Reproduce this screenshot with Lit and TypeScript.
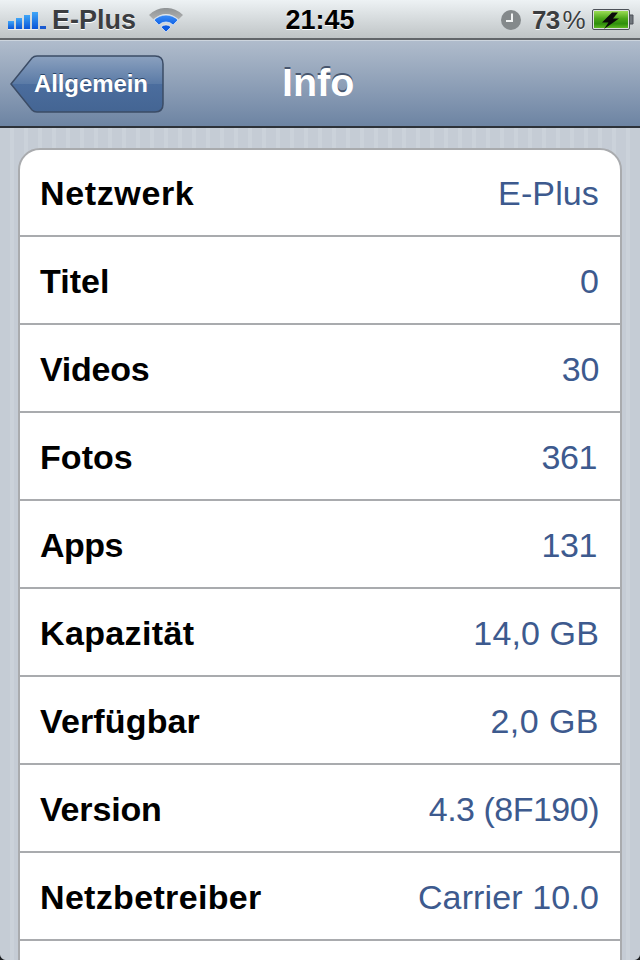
import { LitElement, html, css, svg } from 'lit';
import { customElement } from 'lit/decorators.js';

// label, value, label tracking, value tracking, extra right inset
const rows: [string, string, number, number, number][] = [
  ['Netzwerk', 'E-Plus', 0.63, 0.13, 0],
  ['Titel', '0', 0.05, 0, 0],
  ['Videos', '30', -0.25, -0.3, 0],
  ['Fotos', '361', 0.05, -0.4, 2],
  ['Apps', '131', -0.5, -0.4, 2],
  ['Kapazität', '14,0 GB', 0.36, 0.13, 0],
  ['Verfügbar', '2,0 GB', 0.14, 0.46, 0],
  ['Version', '4.3 (8F190)', -0.18, -0.5, 0],
  ['Netzbetreiber', 'Carrier 10.0', 0.33, 0.13, 0],
  ['', '', 0, 0, 0],
];

const signal = svg`<svg class="signal" width="38" height="18" viewBox="0 0 38 18">
  <defs><linearGradient id="sig" x1="0" y1="0" x2="0" y2="1"><stop offset="0" stop-color="#3fa6f7"/><stop offset="1" stop-color="#0a55d8"/></linearGradient></defs>
  <rect x="0" y="9" width="6" height="8" fill="url(#sig)"/>
  <rect x="8" y="6" width="6" height="11" fill="url(#sig)"/>
  <rect x="16" y="3" width="6" height="14" fill="url(#sig)"/>
  <rect x="24" y="0" width="6" height="17" fill="url(#sig)"/>
  <rect x="32" y="14" width="6" height="3" fill="#1a5ad0"/>
  <rect x="0" y="17" width="30" height="1" fill="#fff" opacity="0.7"/>
</svg>`;

const wifi = svg`<svg class="wifi" width="34" height="25" viewBox="0 0 34 25">
  <defs>
    <linearGradient id="wg" x1="0" y1="0" x2="0" y2="1"><stop offset="0" stop-color="#8f9395"/><stop offset="1" stop-color="#aeb0b0"/></linearGradient>
    <linearGradient id="wb" x1="0" y1="0" x2="0" y2="1"><stop offset="0" stop-color="#3d8df5"/><stop offset="1" stop-color="#0f62e6"/></linearGradient>
  </defs>
  <path d="M0 7 A24 24 0 0 1 34 7 L29.700 11.300 A18 18 0 0 0 4.300 11.300 Z" fill="url(#wg)"/>
  <path d="M5 12 A17 17 0 0 1 29 12 L24.100 16.900 A10 10 0 0 0 9.900 16.900 Z" fill="url(#wb)" stroke="#fff" stroke-width="0.600"/>
  <path d="M12 19 A7 7 0 0 1 22 19 L17 24 Z" fill="#0d5ae0" stroke="#fff" stroke-width="0.600"/>
</svg>`;

const clock = svg`<svg class="clock" width="20" height="20" viewBox="0 0 20 20">
  <circle cx="10" cy="10" r="10" fill="#84898b"/>
  <path d="M11 3.500 V11 H5" stroke="#f2f4f4" stroke-width="2" fill="none"/>
</svg>`;

const battery = svg`<svg class="battery" width="42" height="22" viewBox="0 0 42 22">
  <defs><linearGradient id="bat" x1="0" y1="0" x2="0" y2="1">
    <stop offset="0" stop-color="#9bdc55"/><stop offset="0.45" stop-color="#4aa518"/>
    <stop offset="0.75" stop-color="#2f8f0c"/><stop offset="1" stop-color="#5cb824"/>
  </linearGradient></defs>
  <rect x="0.500" y="0.500" width="37" height="20" rx="1.500" fill="#dfe2e3" stroke="#4c5158"/>
  <rect x="2" y="2" width="34" height="17" fill="url(#bat)"/>
  <path d="M38 6 H41 V15 H38" fill="#70767c" stroke="#4c5158"/>
  <path d="M20 3.500 H26 L21 9.500 H27 L12 20 L16.500 13.500 H10 Z" fill="#0a0a0a"/>
</svg>`;

@customElement('app-root')
export class AppRoot extends LitElement {
  static styles = css`
    :host {
      display: block;
      position: relative;
      width: 640px;
      height: 960px;
      overflow: hidden;
      font-family: 'Liberation Sans', Arial, sans-serif;
      background: repeating-linear-gradient(90deg, #c5ccd5 0, #c5ccd5 10px, #cbd2da 10px, #cbd2da 14px);
    }
    .status {
      height: 40px;
      box-sizing: border-box;
      border-bottom: 2px solid #62666a;
      background: linear-gradient(#edf2f4, #bfc4c6);
      display: grid;
      grid-template-columns: 1fr auto 1fr;
      align-items: center;
      padding: 3px 6px 0 8px;
      color: #3b3d40;
      font-size: 27px;
      font-weight: 700;
      text-shadow: 0 1px 0 #fff;
    }
    .left, .right {
      display: flex;
      align-items: center;
    }
    .right { justify-content: flex-end; }
    .carrier { margin-left: 6px; }
    .wifi { margin-left: 13px; }
    .time { color: #000; padding-right: 2px; }
    .clock { margin-right: 11px; margin-top: -2px; }
    .battery { margin-top: -2px; }
    .pct { font-size: 26px; margin-right: 7px; letter-spacing: -0.7px; }
    .pct span { font-weight: 400; margin-left: 3px; }
    .nav {
      height: 88px;
      box-sizing: border-box;
      border-top: 1px solid #cdd5de;
      border-bottom: 2px solid #2d3239;
      background: linear-gradient(#b0bccc, #6d84a3);
      position: relative;
      display: flex;
      align-items: center;
      padding: 1px 0 0 10px;
    }
    .back {
      position: relative;
      height: 58px;
      width: 154px;
      display: flex;
      align-items: center;
      color: #fff;
      font-size: 24px;
      font-weight: 700;
      letter-spacing: -0.1px;
      text-shadow: 0 -1px 0 #2b4568;
    }
    .back svg { position: absolute; left: 0; top: 0; }
    .back span { position: relative; margin-left: 24px; }
    .title {
      position: absolute;
      left: 282px;
      top: 16px;
      color: #fff;
      font-size: 39.500px;
      font-weight: 700;
      line-height: 50px;
      text-shadow: 0 -2px 0 #47566e;
    }
    .card {
      margin: 20px 18px 0;
      background: #fff;
      border: 2px solid #a9abae;
      border-radius: 22px 22px 0 0;
    }
    .row {
      height: 84px;
      border-bottom: 2px solid #a9abae;
      display: flex;
      align-items: center;
      justify-content: space-between;
      padding: 2px 21px 0 20px;
    }
    .row:first-child { height: 83px; }
    .label { color: #000; font-size: 34px; font-weight: 700; }
    .value { color: #3d5a8e; font-size: 34px; }
    .corner {
      position: absolute;
      bottom: 0;
      width: 6px;
      height: 6px;
    }
    .corner.bl { left: 0; background: radial-gradient(circle at 100% 0, transparent 5.500px, #1c1f22 6.500px); }
    .corner.br { right: 0; background: radial-gradient(circle at 0 0, transparent 5.500px, #1c1f22 6.500px); }
  `;

  render() {
    return html`
      <div class="status">
        <div class="left">${signal}<span class="carrier">E-Plus</span>${wifi}</div>
        <div class="time">21:45</div>
        <div class="right">${clock}<span class="pct">73<span>%</span></span>${battery}</div>
      </div>
      <div class="nav">
        <div class="back">
          <svg width="154" height="58" viewBox="0 0 154 58">
            <defs><linearGradient id="btn" x1="0" y1="0" x2="0" y2="1">
              <stop offset="0" stop-color="#8ba1bf"/><stop offset="0.5" stop-color="#5a7aa6"/>
              <stop offset="0.5" stop-color="#4b6d9e"/><stop offset="1" stop-color="#446593"/>
            </linearGradient></defs>
            <path d="M1 29 L22 3 Q24 1 27 1 H145 Q153 1 153 9 V49 Q153 57 145 57 H27 Q24 57 22 55 Z" fill="url(#btn)" stroke="#3b4c66" stroke-width="1.500"/>
          </svg>
          <span>Allgemein</span>
        </div>
        <div class="title">Info</div>
      </div>
      <div class="card">
        ${rows.map(
          ([k, v, ls, vs, inset]) => html`<div class="row">
            <span class="label" style="letter-spacing:${ls}px">${k}</span>
            <span class="value" style="letter-spacing:${vs}px;margin-right:${inset}px">${v}</span>
          </div>`
        )}
      </div>
      <div class="corner bl"></div>
      <div class="corner br"></div>
    `;
  }
}
